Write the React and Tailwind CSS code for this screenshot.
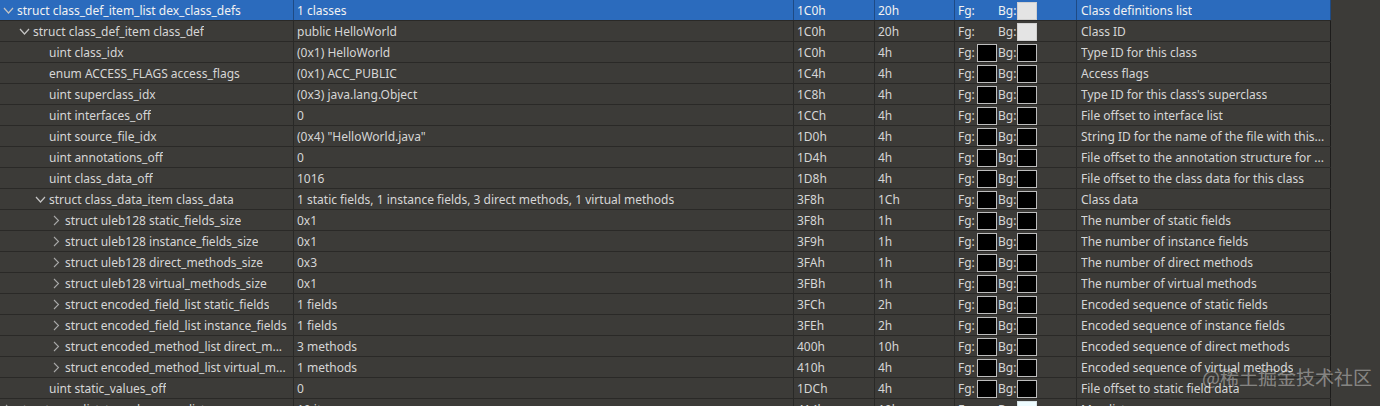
import React from "react";

const rows = [
  { lvl: 0, open: true, name: "struct class_def_item_list dex_class_defs", value: "1 classes", start: "1C0h", size: "20h", fg: null, bg: "light", comment: "Class definitions list", selected: true },
  { lvl: 1, open: true, name: "struct class_def_item class_def", value: "public HelloWorld", start: "1C0h", size: "20h", fg: null, bg: "light", comment: "Class ID" },
  { lvl: 2, name: "uint class_idx", value: "(0x1) HelloWorld", start: "1C0h", size: "4h", comment: "Type ID for this class" },
  { lvl: 2, name: "enum ACCESS_FLAGS access_flags", value: "(0x1) ACC_PUBLIC", start: "1C4h", size: "4h", comment: "Access flags" },
  { lvl: 2, name: "uint superclass_idx", value: "(0x3) java.lang.Object", start: "1C8h", size: "4h", comment: "Type ID for this class's superclass" },
  { lvl: 2, name: "uint interfaces_off", value: "0", start: "1CCh", size: "4h", comment: "File offset to interface list" },
  { lvl: 2, name: "uint source_file_idx", value: '(0x4) "HelloWorld.java"', start: "1D0h", size: "4h", comment: "String ID for the name of the file with this..." },
  { lvl: 2, name: "uint annotations_off", value: "0", start: "1D4h", size: "4h", comment: "File offset to the annotation structure for ..." },
  { lvl: 2, name: "uint class_data_off", value: "1016", start: "1D8h", size: "4h", comment: "File offset to the class data for this class" },
  { lvl: 2, open: true, name: "struct class_data_item class_data", value: "1 static fields, 1 instance fields, 3 direct methods, 1 virtual methods", start: "3F8h", size: "1Ch", comment: "Class data" },
  { lvl: 3, open: false, name: "struct uleb128 static_fields_size", value: "0x1", start: "3F8h", size: "1h", comment: "The number of static fields" },
  { lvl: 3, open: false, name: "struct uleb128 instance_fields_size", value: "0x1", start: "3F9h", size: "1h", comment: "The number of instance fields" },
  { lvl: 3, open: false, name: "struct uleb128 direct_methods_size", value: "0x3", start: "3FAh", size: "1h", comment: "The number of direct methods" },
  { lvl: 3, open: false, name: "struct uleb128 virtual_methods_size", value: "0x1", start: "3FBh", size: "1h", comment: "The number of virtual methods" },
  { lvl: 3, open: false, name: "struct encoded_field_list static_fields", value: "1 fields", start: "3FCh", size: "2h", comment: "Encoded sequence of static fields" },
  { lvl: 3, open: false, name: "struct encoded_field_list instance_fields", value: "1 fields", start: "3FEh", size: "2h", comment: "Encoded sequence of instance fields" },
  { lvl: 3, open: false, name: "struct encoded_method_list direct_m...", value: "3 methods", start: "400h", size: "10h", comment: "Encoded sequence of direct methods" },
  { lvl: 3, open: false, name: "struct encoded_method_list virtual_m...", value: "1 methods", start: "410h", size: "4h", comment: "Encoded sequence of virtual methods" },
  { lvl: 2, name: "uint static_values_off", value: "0", start: "1DCh", size: "4h", comment: "File offset to static field data" },
  { lvl: 0, open: false, name: "struct map_list_type dex_map_list", value: "19 items", start: "414h", size: "10h", fg: null, bg: "cyan", comment: "Map list" },
];

const indent = ["pl-[1px]", "pl-[17px]", "pl-[33px]", "pl-[49px]"];

function Chevron({ open }) {
  return open ? (
    <svg width="16" height="21" viewBox="0 0 16 21" className="shrink-0">
      <polyline points="3,8 7.5,13 12,8" fill="none" stroke="#c4c4c4" strokeWidth="1.2" />
    </svg>
  ) : (
    <svg width="16" height="21" viewBox="0 0 16 21" className="shrink-0">
      <polyline points="5,6 9.5,10.5 5,15" fill="none" stroke="#a8a8a8" strokeWidth="1.1" />
    </svg>
  );
}

function Swatch({ kind }) {
  if (kind === null) return <span className="w-[20px] h-[18px] shrink-0" />;
  if (kind === "light")
    return <span className="w-[20px] h-[18px] shrink-0 bg-[#e4e4e4] border border-[#d0d0d0]" />;
  if (kind === "cyan")
    return <span className="w-[20px] h-[18px] shrink-0 bg-[#eefcff] border border-[#d8e4e8]" />;
  return <span className="w-[20px] h-[18px] shrink-0 bg-black border border-[#bdbdbd]" />;
}

function Row({ r }) {
  const cell = "h-full flex items-center border-r border-black/30 overflow-hidden whitespace-nowrap shrink-0";
  const fg = r.fg === undefined ? "black" : r.fg;
  const bg = r.bg === undefined ? "black" : r.bg;
  return (
    <div
      className={`flex h-[21px] w-[1331px] border-b border-[#2a2927] ${
        r.selected ? "bg-[#2b6bbd] text-[#f2f2f2]" : "text-[#d6d6d6]"
      }`}
    >
      <div className={`${cell} w-[294px] ${indent[r.lvl]}`}>
        {r.open === undefined ? <span className="w-[16px] shrink-0" /> : <Chevron open={r.open} />}
        <span className="truncate leading-[16px] pt-[2px]">{r.name}</span>
      </div>
      <div className={`${cell} w-[500px] pl-[3px]`}>
        <span className="leading-[16px] pt-[2px]">{r.value}</span>
      </div>
      <div className={`${cell} w-[81px] pl-[3px]`}>
        <span className="leading-[16px] pt-[2px]">{r.start}</span>
      </div>
      <div className={`${cell} w-[80px] pl-[3px]`}>
        <span className="leading-[16px] pt-[2px]">{r.size}</span>
      </div>
      <div className={`${cell} w-[122px] pl-[3px] pt-[1px]`}>
        <span className="w-[19px] shrink-0 leading-[16px] pt-[1px]">Fg:</span>
        <Swatch kind={fg} />
        <span className="ml-[1px] w-[19px] shrink-0 leading-[16px] pt-[1px]">Bg:</span>
        <Swatch kind={bg} />
      </div>
      <div className={`${cell} w-[254px] pl-[4px]`}>
        <span className="truncate leading-[16px] pt-[2px]">{r.comment}</span>
      </div>
    </div>
  );
}

export default function App() {
  return (
    <div
      className="relative w-[1380px] h-[406px] overflow-hidden bg-[#3c3b38] text-[12px] leading-none"
      style={{ fontFamily: '"Noto Sans", "Noto Sans CJK SC", sans-serif' }}
    >
      <div className="flex flex-col w-[1331px] border-r border-[#2a2927]">
        {rows.map((r, i) => (
          <Row key={i} r={r} />
        ))}
      </div>
      <div
        className="absolute left-[1202px] top-[367px] text-[19px] text-white/40 whitespace-nowrap"
        style={{ fontFamily: '"Noto Sans CJK SC", sans-serif' }}
      >
        @稀土掘金技术社区
      </div>
    </div>
  );
}
